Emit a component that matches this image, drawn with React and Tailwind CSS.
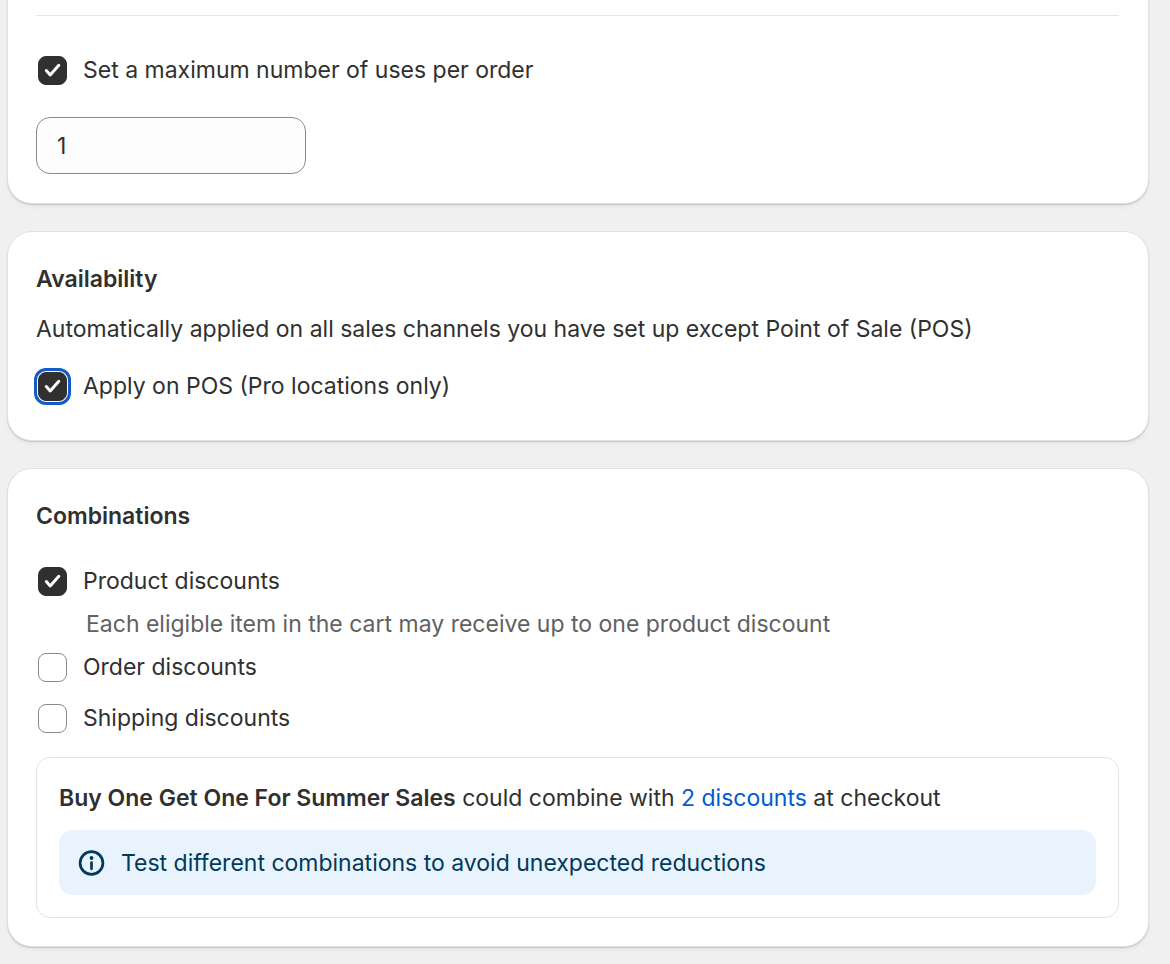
function Check({ id, label, help, defaultChecked, focused }) {
  return (
    <div>
      <div className="flex items-center gap-4">
        <span className={"relative ml-0.5 flex size-[29px] rounded-lg " + (focused ? "outline-3 outline-offset-1 outline-[#135bc9]" : "")}>
          <input
            id={id}
            type="checkbox"
            defaultChecked={defaultChecked}
            className="peer size-full appearance-none rounded-lg border border-[#8a8a8a] bg-white checked:border-[#303030] checked:bg-[#303030]"
          />
          <svg viewBox="0 0 29 29" fill="none" stroke="#fff" strokeWidth="3" strokeLinecap="round" strokeLinejoin="round" className="pointer-events-none absolute inset-0 hidden peer-checked:block" aria-hidden="true">
            <path d="M8.300 14.600l3.900 4.300L20.800 9.300" />
          </svg>
        </span>
        <label htmlFor={id} className="text-[23px] leading-8">{label}</label>
      </div>
      {help && <p className="pl-[50px] pt-[11px] text-[23px] leading-8 text-[#616161]">{help}</p>}
    </div>
  );
}

const card = "bg-white pl-7 pr-[29px] shadow-[0_0_0_1px_#e2e2e2,0_1px_1px_1px_#c4c4c4,0_4px_4px_#e6e6e6]";

export default function App() {
  return (
    <main className="flex min-h-screen flex-col gap-[29px] overflow-hidden bg-[#f0f0f0] pb-4 pl-2 pr-[22px] font-['Inter',sans-serif] text-[#303030]">
      <section className={card + " rounded-b-3xl pb-[29px] pt-[15px]"}>
        <hr className="border-[#e6e6e6]" />
        <div className="pt-[38px]">
          <Check id="max" label="Set a maximum number of uses per order" defaultChecked />
        </div>
        <input aria-label="Maximum uses" defaultValue="1" className="mt-[31px] block h-[57px] w-[270px] rounded-[14px] border border-[#8a8a8a] bg-[#fdfdfd] px-5 text-[23px]" />
      </section>

      <section className={card + " rounded-3xl pb-[38px] pt-[31px]"}>
        <h2 className="text-[23px] font-semibold leading-8">Availability</h2>
        <p className="pt-[18px] text-[23px] leading-8">Automatically applied on all sales channels you have set up except Point of Sale (POS)</p>
        <div className="pt-[25px]">
          <Check id="pos" label="Apply on POS (Pro locations only)" defaultChecked focused />
        </div>
      </section>

      <section className={card + " rounded-3xl pb-7 pt-[31px]"}>
        <h2 className="text-[23px] font-semibold leading-8">Combinations</h2>
        <div className="pt-[33px]">
          <Check id="product" label="Product discounts" defaultChecked help="Each eligible item in the cart may receive up to one product discount" />
        </div>
        <div className="flex flex-col gap-[19px] pt-[11px]">
          <Check id="order" label="Order discounts" />
          <Check id="shipping" label="Shipping discounts" />
        </div>
        <div className="mt-[23px] rounded-[14px] border border-[#e3e3e3] px-[22px] pb-[22px] pt-6">
          <p className="text-[23px] leading-8">
            <strong className="font-semibold">Buy One Get One For Summer Sales</strong> could combine with{" "}
            <a href="#discounts" className="text-[#005bd3]">2 discounts</a> at checkout
          </p>
          <div className="mt-4 flex items-center gap-4 rounded-[14px] bg-[#e9f3fe] px-[19px] pb-4 pt-[17px] text-[#003a5a]">
            <svg viewBox="0 0 27 27" className="size-[27px]" fill="none" stroke="currentColor" strokeWidth="2.700" strokeLinecap="round" aria-hidden="true">
              <circle cx="13.500" cy="13" r="11.400" />
              <path d="M13.500 12.600v6.200" />
              <circle cx="13.500" cy="8" r="1.900" fill="currentColor" stroke="none" />
            </svg>
            <p className="text-[23px] leading-8">Test different combinations to avoid unexpected reductions</p>
          </div>
        </div>
      </section>
    </main>
  );
}
